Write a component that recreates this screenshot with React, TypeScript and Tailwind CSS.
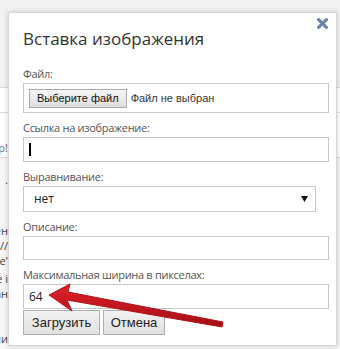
import React from 'react';

const font = { fontFamily: '"Open Sans", "Liberation Sans", sans-serif' };
const arial = '[font-family:"Liberation_Sans",Arial,sans-serif]';

const labelClass = 'block pt-[7px] pb-[1px] text-[11px] leading-[16px] tracking-[-0.3px] text-[#555]';
const inputClass = 'block w-[306px] border border-[#c8c8c8] bg-white';

function Backdrop() {
  const frag = (t: string, cls = '') => (
    <div className={`flex h-[15px] w-[8px] justify-end overflow-hidden whitespace-nowrap text-[11px] leading-[15px] text-[#444] ${cls}`}>
      {t}
    </div>
  );
  return (
    <div className="absolute inset-0 flex flex-col bg-white">
      <div className="h-[88px] border-b border-[#dcdcdc] bg-[#f2f2f2]" />
      <div className="h-[25px] border-b border-[#dcdcdc] bg-white" />
      <div className="flex h-[45px] flex-col justify-end border-b border-[#dcdcdc] bg-white pb-[2px]">
        {frag('пример!', 'text-[#777]')}
      </div>
      <div className="flex flex-1 flex-col bg-[#f7f7f7] pt-[14px]">
        {frag('.')}
        <div className="h-[36px]" />
        {frag('изменен')}
        {frag('http://')}
        {frag("e'")}
        <div className="h-[3px]" />
        {frag('ые i')}
        {frag('загран')}
        <div className="h-[30px]" />
        {frag('значени')}
      </div>
    </div>
  );
}

function Arrow() {
  return (
    <svg className="absolute left-0 top-0 h-[349px] w-[340px]" viewBox="0 0 340 349" aria-hidden>
      <defs>
        <linearGradient id="ar" x1="0" y1="0" x2="0" y2="1">
          <stop offset="0" stopColor="#e0222a" />
          <stop offset="1" stopColor="#a50d14" />
        </linearGradient>
      </defs>
      <polygon
        points="49,295 70,284 68,292 223,322 222,327 67,300 72,311"
        fill="url(#ar)"
        stroke="#b3121a"
        strokeWidth="1"
        strokeLinejoin="round"
      />
    </svg>
  );
}

export default function App() {
  return (
    <div className="relative h-[349px] w-[340px] overflow-hidden" style={font}>
      <Backdrop />

      {/* Dialog */}
      <div className="absolute left-[8px] top-[12px] h-[334px] w-[329px] border border-[#d6d6d6] bg-white pl-[14px] pt-[14px] shadow-[0_0_6px_rgba(0,0,0,0.18)]">
        <svg className="absolute right-[8px] top-[5px] h-[11px] w-[11px]" viewBox="0 0 10 10" aria-hidden>
          <path d="M1.5 1.5 L8.5 8.5 M8.5 1.5 L1.5 8.5" stroke="#6b86a4" strokeWidth="2.8" strokeLinecap="square" />
        </svg>

        <h1 className="h-[24px] text-[17px] font-normal leading-[24px] text-[#333]">Вставка изображения</h1>
        <div className="h-[8px]" />

        <label className={labelClass}>Файл:</label>
        <div className={`${inputClass} flex h-[30px] items-center pl-[5px] ${arial}`}>
          <span className="flex h-[19px] items-center border border-[#a9a9a9] bg-gradient-to-b from-[#f6f6f6] to-[#dedede] px-[7px] text-[11px] text-[#111]">
            Выберите файл
          </span>
          <span className="pl-[4px] text-[11px] text-[#333]">Файл не выбран</span>
        </div>

        <label className={labelClass}>Ссылка на изображение:</label>
        <div className={`${inputClass} flex h-[25px] items-center pl-[5px]`}>
          <span className="h-[13px] w-[1.5px] bg-black" />
        </div>

        <label className={labelClass}>Выравнивание:</label>
        <div className="flex h-[26px] w-[293px] items-center justify-between border border-[#c8c8c8] bg-white pl-[10px] pr-[7px]">
          <span className="text-[12px] text-[#222]">нет</span>
          <svg className="h-[6px] w-[7px]" viewBox="0 0 7 6" aria-hidden>
            <path d="M0 0 H7 L3.5 6 Z" fill="#111" />
          </svg>
        </div>

        <label className={labelClass}>Описание:</label>
        <div className={`${inputClass} h-[24px]`} />

        <label className={labelClass}>Максимальная ширина в пикселах:</label>
        <div className={`${inputClass} flex h-[25px] items-center pl-[5px] text-[12px] text-[#222]`}>64</div>

        <div className={`mt-[1px] flex gap-[3px] ${arial}`}>
          <button className="h-[25px] w-[77px] border border-[#adadad] bg-gradient-to-b from-[#f2f2f2] to-[#e0e0e0] text-[13px] text-[#222]">
            Загрузить
          </button>
          <button className="h-[25px] w-[62px] border border-[#adadad] bg-gradient-to-b from-[#f2f2f2] to-[#e0e0e0] text-[13px] text-[#222]">
            Отмена
          </button>
        </div>
      </div>

      <Arrow />
    </div>
  );
}
